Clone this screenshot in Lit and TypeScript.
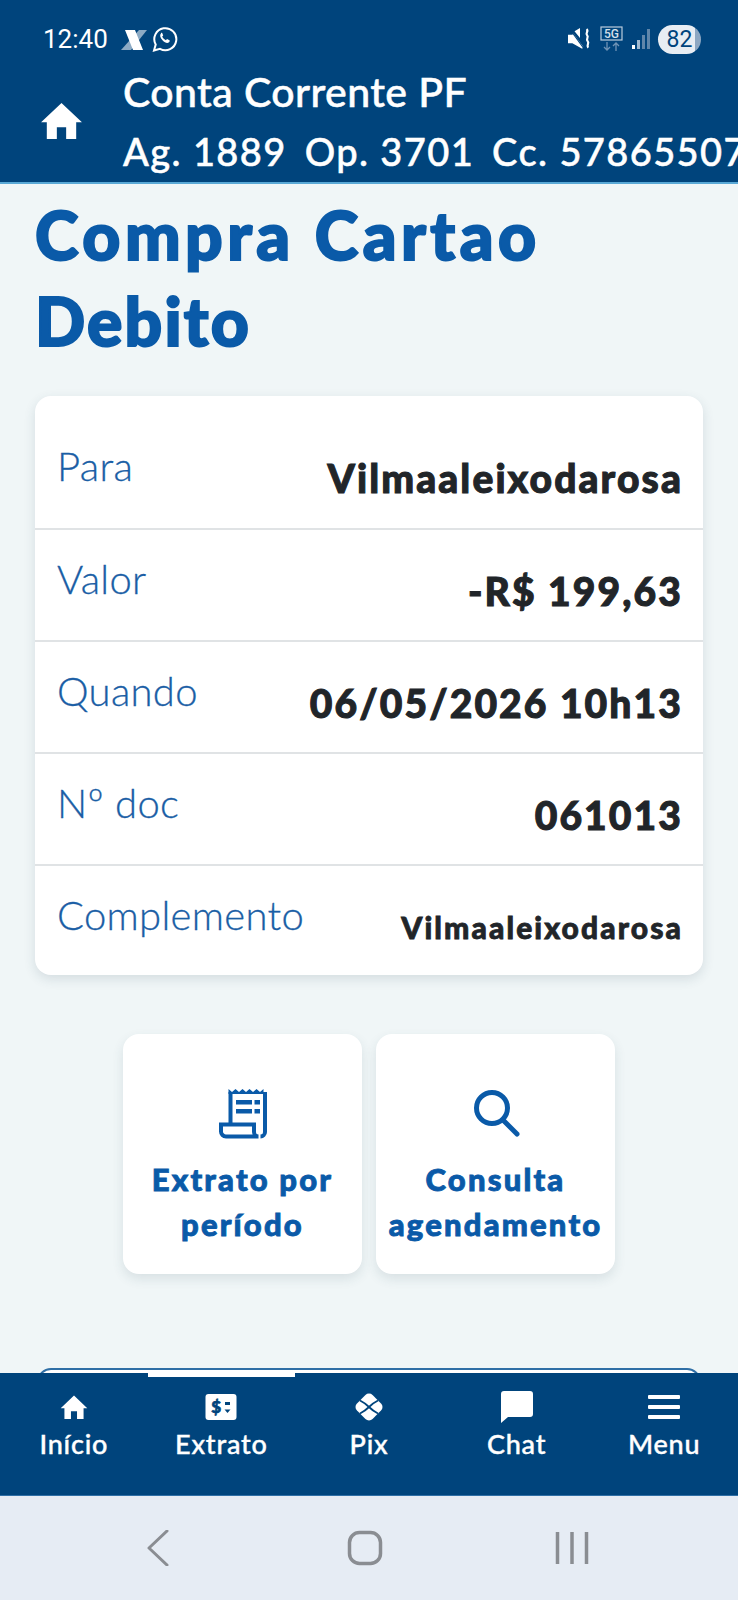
// app.ts
// Extrato detail screen: transaction card, shortcuts and bottom navigation

import { LitElement, html, css, svg } from "lit";
import { customElement } from "lit/decorators.js";

const homeIcon = svg`<path d="M12 2.2 0.6 13h3.2v9.3h5.6v-6.6h5.200v6.600h5.600V13h3.200z" fill="currentColor"/>`;

const rows = [
  { label: "Para", value: "Vilmaaleixodarosa", small: false },
  { label: "Valor", value: "-R$ 199,63", small: false },
  { label: "Quando", value: "06/05/2026 10h13", small: false },
  { label: "Nº doc", value: "061013", small: false },
  { label: "Complemento", value: "Vilmaaleixodarosa", small: true },
];

const navItems = [
  {
    label: "Início",
    icon: html`<svg class="nav-icon home" viewBox="0 0 24 24">${homeIcon}</svg>`,
  },
  {
    label: "Extrato",
    active: true,
    icon: html`<svg class="nav-icon" viewBox="0 0 32 28">
      <rect x="0.5" y="1" width="31" height="26" rx="3" fill="#fff" />
      <text x="11.5" y="20" text-anchor="middle" font-family="Lato" font-weight="900" font-size="17" stroke="#00447c" stroke-width="0.7" fill="#00447c">$</text>
      <rect x="20" y="9" width="5" height="3" fill="#00447c" />
      <path d="M19.5 16.5h6l-3 3.5z" fill="#00447c" />
    </svg>`,
  },
  {
    label: "Pix",
    icon: html`<svg class="nav-icon" viewBox="0 0 32 32">
      <rect x="5" y="5" width="22" height="22" rx="5" fill="#fff" transform="rotate(45 16 16)" />
      <path d="M7 9.500 C12 12 14 14 16 16 S20 20 25 22.500 M25 9.500 C20 12 18 14 16 16 S12 20 7 22.500" fill="none" stroke="#00447c" stroke-width="1.800" />
    </svg>`,
  },
  {
    label: "Chat",
    icon: html`<svg class="nav-icon" viewBox="0 0 32 32">
      <path d="M3 0H29A3 3 0 0 1 32 3V23A3 3 0 0 1 29 26H7L0 32V3A3 3 0 0 1 3 0Z" fill="#fff" />
    </svg>`,
  },
  {
    label: "Menu",
    icon: html`<svg class="nav-icon" viewBox="0 0 32 24">
      <g fill="#fff">
        <rect y="0" width="32" height="4" rx="1" />
        <rect y="10" width="32" height="4" rx="1" />
        <rect y="20" width="32" height="4" rx="1" />
      </g>
    </svg>`,
  },
];

@customElement("app-root")
export class AppRoot extends LitElement {
  static styles = css`
    :host {
      display: flex;
      flex-direction: column;
      width: 738px;
      height: 1600px;
      overflow: hidden;
      background: #f0f6f7;
      font-family: Lato, "Open Sans", sans-serif;
    }

    .top {
      flex: none;
      height: 182px;
      background: #00447c;
      border-bottom: 2px solid #5aa9d6;
      color: #fff;
      overflow: hidden;
    }

    .status {
      display: flex;
      align-items: center;
      height: 26px;
      padding: 26px 37px 0 43px;
    }

    .time {
      font-family: Roboto, sans-serif;
      font-size: 26px;
      margin-right: 12px;
    }

    .status-wa {
      margin-left: 4px;
    }

    .status-right {
      display: flex;
      align-items: center;
      margin-left: auto;
      gap: 8px;
    }

    .battery {
      display: flex;
      align-items: center;
      justify-content: center;
      width: 43px;
      height: 29px;
      border-radius: 15px;
      background: linear-gradient(90deg, #e8edf3 85%, #8da7c2 85%);
      color: #00447c;
      font-family: Roboto, sans-serif;
      font-size: 23px;
    }

    .account {
      display: flex;
      align-items: center;
      padding: 17px 0 0 40px;
    }

    .account-home {
      flex: none;
      width: 43px;
      height: 43px;
      margin-right: 40px;
      margin-top: -2px;
    }

    .account-text {
      white-space: nowrap;
      -webkit-text-stroke: 0.5px #fff;
    }

    .account-name {
      font-size: 41px;
      font-weight: 500;
      line-height: 46px;
      letter-spacing: 0.4px;
    }

    .account-nums {
      display: flex;
      gap: 18px;
      margin-top: 14px;
      font-size: 38px;
      font-weight: 500;
      line-height: 44px;
      letter-spacing: 1.4px;
    }

    main {
      flex: 1;
      min-height: 0;
      overflow: hidden;
      padding: 8px 35px 0;
    }

    h1 {
      margin: 0 0 32px;
      color: #0a5aa8;
      font-size: 66px;
      font-weight: 900;
      line-height: 86px;
      letter-spacing: 4.5px;
      -webkit-text-stroke: 2px #0a5aa8;
    }

    h1 span {
      letter-spacing: 2.2px;
    }

    .card {
      background: #fff;
      border-radius: 16px;
      box-shadow: 0 4px 12px rgba(40, 70, 90, 0.14);
    }

    .row {
      display: flex;
      justify-content: space-between;
      box-sizing: border-box;
      height: 112px;
      padding: 0 20px 0 22px;
      border-bottom: 2px solid #e0e3e5;
    }

    .row:first-child {
      height: 134px;
      padding-top: 21px;
    }

    .row:last-child {
      height: 109px;
      border-bottom: none;
    }

    .label {
      margin-top: 26px;
      color: #1a5ea5;
      font-size: 40px;
      font-weight: 300;
      line-height: 46px;
      letter-spacing: 0.3px;
      -webkit-text-stroke: 0.3px #1a5ea5;
    }

    .value {
      margin-top: 38px;
      color: #212529;
      font-size: 39px;
      font-weight: 900;
      line-height: 46px;
      letter-spacing: 2.1px;
      -webkit-text-stroke: 1px #212529;
    }

    .value.small {
      font-size: 30px;
      margin-top: 41px;
      line-height: 40px;
      letter-spacing: 2.1px;
      -webkit-text-stroke: 0.8px #212529;
    }

    .shortcuts {
      display: flex;
      justify-content: center;
      gap: 14px;
      margin-top: 59px;
    }

    .shortcut {
      display: flex;
      flex-direction: column;
      align-items: center;
      box-sizing: border-box;
      width: 239px;
      height: 240px;
      padding-top: 53px;
      border-radius: 16px;
      background: #fff;
      box-shadow: 0 5px 12px rgba(40, 70, 90, 0.12);
      color: #0a5aa8;
      text-align: center;
      font-size: 31px;
      font-weight: 900;
      line-height: 45px;
      letter-spacing: 2.2px;
      -webkit-text-stroke: 0.9px #0a5aa8;
    }

    .shortcut svg {
      width: 48px;
      height: 52px;
      margin-bottom: 18px;
    }

    .peek {
      height: 40px;
      margin: 94px 2px 0;
      border: 2px solid #2f6fa6;
      border-radius: 14px;
      background: #fff;
    }

    nav {
      flex: none;
      display: grid;
      grid-template-columns: repeat(5, 1fr);
      height: 122px;
      background: #00447c;
      border-bottom: 1px solid #2f6fa6;
    }

    .nav-item {
      display: flex;
      flex-direction: column;
      align-items: center;
      border-top: 4px solid transparent;
      color: #fff;
      font-size: 27px;
      font-weight: 500;
      letter-spacing: 0.8px;
      -webkit-text-stroke: 0.4px #fff;
    }

    .nav-item.active {
      border-top-color: #fff;
    }

    .nav-icon-box {
      display: flex;
      align-items: center;
      justify-content: center;
      height: 32px;
      margin-top: 14px;
    }

    .nav-icon {
      width: 32px;
      height: 32px;
    }

    .nav-icon.home {
      width: 28px;
      height: 28px;
    }

    .nav-label {
      margin-top: 3px;
      line-height: 36px;
    }

    .sys-nav {
      flex: none;
      height: 104px;
      display: flex;
      align-items: center;
      justify-content: center;
      gap: 171px;
      padding-right: 8px;
      background: #e6ecf4;
      color: #8a8d92;
    }

    .sys-nav svg {
      display: block;
      width: 36px;
      height: 36px;
    }
  `;

  protected render() {
    return html`
      <header class="top">
        <div class="status">
          <span class="time">12:40</span>
          <svg width="28" height="26" viewBox="0 0 26 26">
            <path d="M18 4h8L10 24H0z" fill="#fff" opacity="0.55" />
            <path d="M4 4h10l8 20H12z" fill="#fff" />
          </svg>
          <svg class="status-wa" width="26" height="26" viewBox="0 0 26 26">
            <path d="M2 24.500l1.700-6A11 11 0 1 1 8 22.800z" fill="none" stroke="#fff" stroke-width="2" />
            <path d="M9 7.500c-1.500 1.500-1 4 1.500 6.700s5 3.500 6.500 2c.8-.8.8-1.800.5-2l-2.500-1.200-1.100 1.200c-1.500-.5-3-2-3.700-3.600l1-1.100-1-2.500c-.3-.5-1.400-.3-1.200.5z" fill="#fff" />
          </svg>
          <div class="status-right">
            <svg width="24" height="24" viewBox="0 0 22 22">
              <path d="M0 7h4l1-1 9 12-1 2-9-5H0z M6 4l5-3v9z" fill="#fff" />
              <path d="M1 1l13 18" fill="none" stroke="#00447c" stroke-width="1" />
              <path d="M17 2c2.500 2-1.500 3.500 .5 5.500s-1.500 3.500 .5 5.500-1.500 3.500 .5 6" fill="none" stroke="#fff" stroke-width="2" />
            </svg>
            <svg width="24" height="26" viewBox="0 0 24 26">
              <rect x="1" y="1" width="21" height="13" fill="none" stroke="#b9cbdd" stroke-width="1.200" />
              <text x="11.500" y="12" text-anchor="middle" font-family="Roboto" font-size="12" font-weight="500" fill="#d5e0ea">5G</text>
              <path d="M7 16v8M4 21l3 3 3-3" fill="none" stroke="#6f93b5" stroke-width="1.300" />
              <path d="M16 25v-8M13 20l3-3 3 3" fill="none" stroke="#6f93b5" stroke-width="1.300" />
            </svg>
            <svg width="18" height="22" viewBox="0 0 18 22">
              <rect x="0" y="17" width="3" height="4" fill="#fff" />
              <rect x="5" y="12" width="3" height="9" fill="#9fb8cf" />
              <rect x="10" y="7" width="3" height="14" fill="#5f86aa" />
              <rect x="15" y="1" width="3" height="20" fill="#5f86aa" />
            </svg>
            <span class="battery">82</span>
          </div>
        </div>
        <div class="account">
          <svg class="account-home" viewBox="0 0 24 24">${homeIcon}</svg>
          <div class="account-text">
            <div class="account-name">Conta Corrente PF</div>
            <div class="account-nums">
              <span>Ag. 1889</span><span>Op. 3701</span><span>Cc. 57865507</span>
            </div>
          </div>
        </div>
      </header>

      <main>
        <h1>Compra Cartao<br /><span>Debito</span></h1>

        <section class="card">
          ${rows.map(
            (r) => html`
              <div class="row">
                <span class="label">${r.label}</span>
                <span class="value ${r.small ? "small" : ""}">${r.value}</span>
              </div>
            `
          )}
        </section>

        <div class="shortcuts">
          <div class="shortcut">
            <svg viewBox="0 0 48 52">
              <path d="M9.500 2l3.500 3 3.500-3 3.500 3 3.500-3 3.500 3 3.500-3 3.500 3 3.500-3 3.500 3 3.500-3V7H9.500z" fill="#0a5aa8" />
              <path d="M11.500 5v32M46 5v40a4.500 4.500 0 0 1-4.500 4.500M2 37.500h33v7.500a4.500 4.500 0 0 0 4.500 4.500H7a5 5 0 0 1-5-5z" fill="none" stroke="#0a5aa8" stroke-width="4" />
              <g fill="#0a5aa8">
                <rect x="17" y="13" width="16" height="4.500" />
                <rect x="35.500" y="13" width="5.500" height="4.500" />
                <rect x="17" y="22" width="16" height="4.500" />
                <rect x="35.500" y="22" width="5.500" height="4.500" />
              </g>
            </svg>
            <span>Extrato por<br />período</span>
          </div>
          <div class="shortcut">
            <svg viewBox="0 0 48 52">
              <circle cx="20" cy="21" r="15.500" fill="none" stroke="#0a5aa8" stroke-width="5" />
              <path d="M31 33l14 14" fill="none" stroke="#0a5aa8" stroke-width="5" stroke-linecap="round" />
            </svg>
            <span>Consulta<br />agendamento</span>
          </div>
        </div>

        <div class="peek"></div>
      </main>

      <nav>
        ${navItems.map(
          (item) => html`
            <div class="nav-item ${item.active ? "active" : ""}">
              <div class="nav-icon-box">${item.icon}</div>
              <span class="nav-label">${item.label}</span>
            </div>
          `
        )}
      </nav>

      <div class="sys-nav">
        <svg viewBox="0 0 36 36">
          <path d="M27 1 9 18l18 17" fill="none" stroke="currentColor" stroke-width="3" stroke-linecap="round" stroke-linejoin="round" />
        </svg>
        <svg viewBox="0 0 36 36">
          <rect x="2.500" y="2.500" width="31" height="31" rx="10" fill="none" stroke="currentColor" stroke-width="3.500" />
        </svg>
        <svg viewBox="0 0 36 36">
          <path d="M3.500 2v32M18 2v32M32.500 2v32" fill="none" stroke="currentColor" stroke-width="3.500" />
        </svg>
      </div>
    `;
  }
}
